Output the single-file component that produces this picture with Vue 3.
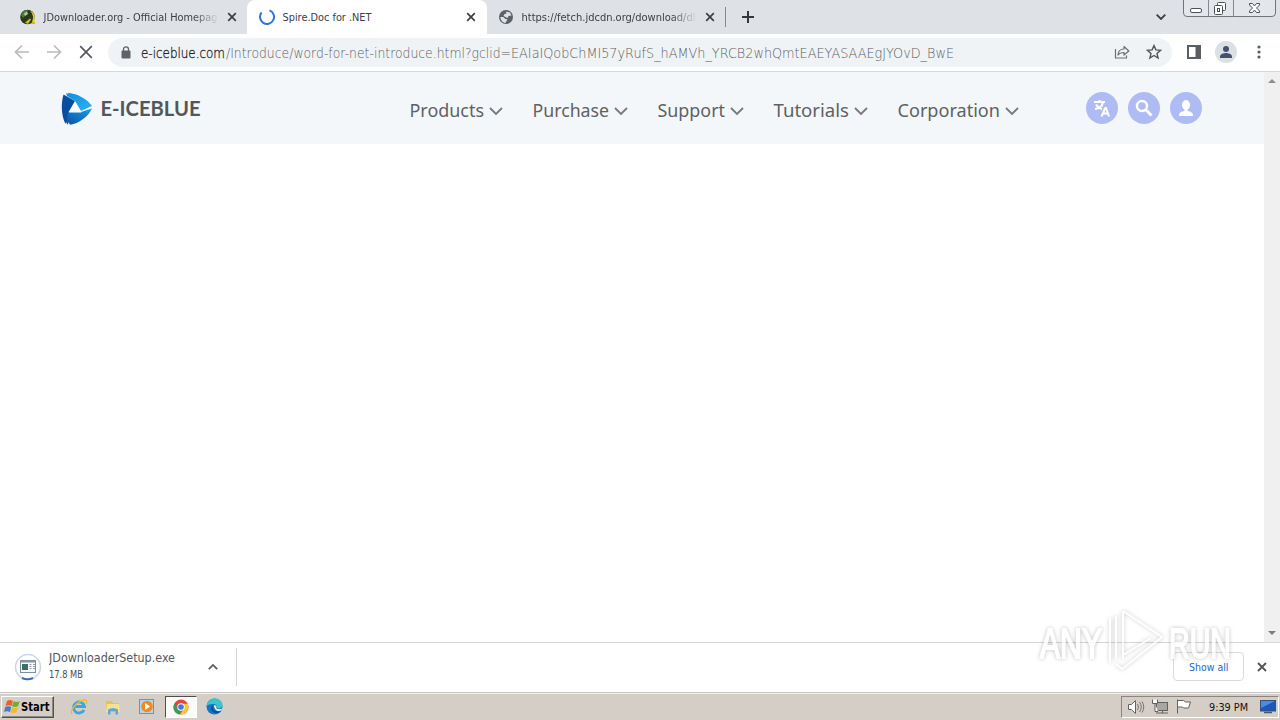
<script setup>
import { ref } from "vue";

const tabs = ref([
    { name: 'jd', text: 'JDownloader.org - Official Homepag', width: 174, active: false },
    { name: 'spire', text: 'Spire.Doc for .NET', width: 89, active: true },
    { name: 'fetch', text: 'https://fetch.jdcdn.org/download/dl', width: 174, active: false },
]);

const navItems = ref([
    { text: 'Products', width: 75 },
    { text: 'Purchase', width: 77 },
    { text: 'Support', width: 68 },
    { text: 'Tutorials', width: 76 },
    { text: 'Corporation', width: 103 },
]);

const activeTab = ref(tabs.value.find(tab => tab.active).name);
function onTabClick(name) {
    activeTab.value = name;
}
</script>

<template>
    <div class="screen">
        <div class="tab-strip">
            <div v-for="tab in tabs" :key="tab.name" class="tab"
                :class="['tab-' + tab.name, { 'tab-active': activeTab === tab.name }]" @click="onTabClick(tab.name)">
                <svg v-if="tab.name === 'jd'" class="tab-icon" viewBox="0 0 16 16">
                    <circle cx="7.500" cy="8" r="7.300" fill="#263a1c" />
                    <path d="M1 6a7 7 0 0 1 7-5l-2 5-3 3z" fill="#4d7a36" />
                    <path d="M4 4.500l3-2 1 2.500-3 2z" fill="#b4c9a0" />
                    <path d="M10 1.500c5 2 6 8 3.500 12l-1.500-1c2-4 1-7-2-11z" fill="#e8cc2a" />
                    <path d="M5 13.500l5-4 1 1-3 4.500zM12 13h3v2h-4z" fill="#d4b822" />
                </svg>
                <svg v-else-if="tab.name === 'spire'" class="tab-icon" viewBox="0 0 16 16">
                    <path d="M10.500 1.400A7 7 0 1 1 2.600 3.500" fill="none" stroke="#2f75d6" stroke-width="2" />
                </svg>
                <svg v-else class="tab-icon" viewBox="0 0 16 16">
                    <circle cx="8" cy="8" r="7" fill="#5c6168" />
                    <path d="M8 2.500l4 1 1.500 3-3 .5-1 2-2-1-2-1 1-2 2-.5z" fill="#dee1e6" />
                    <path d="M2.400 8h3l2 2 2 .3-1 2-1 1.600C4.500 13.500 2.500 11 2.400 8z" fill="#dee1e6" />
                </svg>
                <svg class="tab-title" width="176" height="16">
                    <text x="0.500" y="12" :textLength="tab.width" lengthAdjust="spacingAndGlyphs">{{ tab.text }}</text>
                </svg>
                <svg class="tab-close" viewBox="0 0 10 10">
                    <path d="M1.200 1.200l7.600 7.600M8.800 1.200L1.200 8.800" />
                </svg>
            </div>
            <div class="tab-divider"></div>
            <svg class="new-tab" viewBox="0 0 12 12">
                <path d="M6 0v12M0 6h12" />
            </svg>
            <svg class="tab-search" viewBox="0 0 10 6">
                <path d="M.7.700L5 5 9.300.700" />
            </svg>
            <svg class="window-buttons" width="94" height="18" viewBox="0 0 94 18">
                <path d="M.5 0v13q0 3.500 3.500 3.500h85q3.500 0 3.500-3.500V0" fill="#e3e6ea" stroke="#72767c" />
                <path d="M25.500 0v16.500M50.500 0v16.500" stroke="#85898f" />
                <g fill="#fff" stroke="#4d5157">
                    <rect x="7.500" y="8.500" width="11" height="4" rx="1.500" />
                    <rect x="34.500" y="2.500" width="8" height="8" rx="1" />
                    <rect x="31.500" y="5.500" width="8" height="9" rx="1" />
                    <rect x="34.500" y="8.500" width="2" height="3" />
                    <path d="M66.500 3.500h3l2 2.500 2-2.500h3v1.500l-3 3 3 3v1.500h-3l-2-2.500-2 2.500h-3V11l3-3-3-3z" />
                </g>
            </svg>
        </div>

        <div class="toolbar">
            <svg class="tool back" viewBox="0 0 16 16">
                <path d="M15 8H2M8 1.500L1.500 8 8 14.500" fill="none" stroke="#b9bbbe" stroke-width="1.700" />
            </svg>
            <svg class="tool forward" viewBox="0 0 16 16">
                <path d="M1 8h13M8 1.500L14.500 8 8 14.500" fill="none" stroke="#b9bbbe" stroke-width="1.700" />
            </svg>
            <svg class="tool stop" viewBox="0 0 16 16">
                <path d="M2.200 2.200l11.600 11.600M13.800 2.200L2.200 13.800" fill="none" stroke="#55585c" stroke-width="1.700" />
            </svg>
            <div class="omnibox">
                <svg class="lock" viewBox="0 0 10 13">
                    <rect x=".5" y="4.500" width="9" height="8" rx="1" fill="#5f6368" />
                    <path d="M2.500 5V3.300a2.500 2.500 0 0 1 5 0V5" fill="none" stroke="#5f6368" stroke-width="1.300" />
                </svg>
                <svg class="url" width="820" height="20">
                    <text x="0" y="15.500" class="url-host" textLength="84" lengthAdjust="spacingAndGlyphs">e-iceblue.com</text>
                    <text x="85" y="15.500" class="url-path" textLength="285" lengthAdjust="spacingAndGlyphs">/Introduce/word-for-net-introduce.html?gclid=</text>
                    <text x="370" y="15.500" class="url-path" textLength="443" lengthAdjust="spacingAndGlyphs">EAIaIQobChMI57yRufS_hAMVh_YRCB2whQmtEAEYASAAEgJYOvD_BwE</text>
                </svg>
                <svg class="share" viewBox="0 0 16 16">
                    <path d="M1.500 5v9h11v-2.500" fill="none" stroke="#6b6f74" stroke-width="1.200" />
                    <path d="M4 11c.3-4 2.600-6 6-6V2.500L14.800 7 10 11V8.500C7.500 8.500 5.500 9 4 11z" fill="none" stroke="#6b6f74"
                        stroke-width="1.200" stroke-linejoin="round" />
                </svg>
                <svg class="star" viewBox="0 0 16 16">
                    <path d="M8 1.600l1.900 4.300 4.700.4-3.600 3.100 1.100 4.600L8 11.500 3.900 14 5 9.400 1.400 6.300l4.700-.4z" fill="none"
                        stroke="#505459" stroke-width="1.400" />
                </svg>
            </div>
            <svg class="side-panel" viewBox="0 0 14 14">
                <path d="M0 0h14v14H0zM2 2v10h6.500V2z" fill="#5a5d61" fill-rule="evenodd" />
            </svg>
            <svg class="avatar" viewBox="0 0 22 22">
                <circle cx="11" cy="11" r="11" fill="#dce0e5" />
                <circle cx="11" cy="8" r="3" fill="#44516e" />
                <path d="M5 17v-1.500c0-2.500 4-3.500 6-3.500s6 1 6 3.500V17z" fill="#44516e" />
            </svg>
            <svg class="menu-dots" viewBox="0 0 4 14">
                <circle cx="2" cy="2" r="1.600" />
                <circle cx="2" cy="7" r="1.600" />
                <circle cx="2" cy="12" r="1.600" />
            </svg>
        </div>

        <div class="page">
            <div class="content">
                <header class="site-header">
                    <svg class="logo" width="142" height="34" viewBox="0 0 142 34">
                        <defs>
                            <linearGradient id="logoTop" x1="0" y1="0" x2="1" y2="1">
                                <stop offset="0" stop-color="#0d8fdc" />
                                <stop offset="1" stop-color="#2fb2f6" />
                            </linearGradient>
                            <linearGradient id="logoBottom" x1="0" y1="1" x2="1" y2="0">
                                <stop offset="0" stop-color="#0754a2" />
                                <stop offset="1" stop-color="#1a9cec" />
                            </linearGradient>
                        </defs>
                        <path d="M2.500 2.500L6 4.500l8 4.500-7 12v11.500l-2-2.500-.5 2C0 23 0 11 2.500 2.500z" fill="#0a4d9f" />
                        <path d="M5 1l2.500 1L7 .8C17 2 26 7 31 14l-3.500 1.500L20 19 14 9 6 4z" fill="url(#logoTop)" />
                        <path d="M7 20h13l11-3.500C27 25 18 31.500 9 32.800L7.500 30 7 32.500 5.500 31z" fill="url(#logoBottom)" />
                        <path d="M14 9.500L20.500 20.500h-12.500z" fill="#fff" />
                        <text x="39.500" y="24" class="logo-text" textLength="100" lengthAdjust="spacingAndGlyphs">E-ICEBLUE</text>
                    </svg>
                    <nav class="nav">
                        <a v-for="item in navItems" :key="item.text" class="nav-item">
                            <svg :width="item.width" height="28" class="nav-label">
                                <text x="0.500" y="20" :textLength="item.width - 0.5" lengthAdjust="spacingAndGlyphs">{{ item.text }}</text>
                            </svg>
                            <svg class="nav-chevron" viewBox="0 0 14 9">
                                <path d="M1 1l6 6 6-6" />
                            </svg>
                        </a>
                    </nav>
                    <div class="round-buttons">
                        <svg class="round" viewBox="0 0 32 32">
                            <circle cx="16" cy="16" r="16" fill="#aebcf3" />
                            <path d="M8 10h11M13.500 8v2M10 12.500c1.500 2.500 3.500 4 6 4.500M17 10.500c-.8 3.500-3.500 6-8 6.500M15.500 24.500l3.700-8.500h.8l3 8.500M17 21.500h5"
                                fill="none" stroke="#fff" stroke-width="2" />
                        </svg>
                        <svg class="round" viewBox="0 0 32 32">
                            <circle cx="16" cy="16" r="16" fill="#aebcf3" />
                            <circle cx="14" cy="14" r="5" fill="none" stroke="#fff" stroke-width="2.400" />
                            <path d="M17.500 17.500l6 6" stroke="#fff" stroke-width="2.800" />
                        </svg>
                        <svg class="round" viewBox="0 0 32 32">
                            <circle cx="16" cy="16" r="16" fill="#aebcf3" />
                            <ellipse cx="16" cy="13" rx="4" ry="5" fill="#fff" />
                            <path d="M14.500 16h3v3c3.500.5 5.500 1.500 5.500 5H9c0-3.500 2-4.500 5.500-5z" fill="#fff" />
                        </svg>
                    </div>
                </header>
            </div>
            <div class="scrollbar">
                <svg viewBox="0 0 8 4" class="scroll-arrow">
                    <path d="M0 4l4-4 4 4z" fill="#8f8f8f" />
                </svg>
                <svg viewBox="0 0 8 4" class="scroll-arrow">
                    <path d="M0 0l4 4 4-4z" fill="#7b7b7b" />
                </svg>
            </div>
        </div>

        <div class="shelf">
            <svg class="download-icon" viewBox="0 0 28 28">
                <circle cx="14" cy="14" r="12.500" fill="#fff" stroke="#c9d6ea" stroke-width="1.500" />
                <path d="M8 25a12.500 12.500 0 0 0 11 0" fill="none" stroke="#3f6cb4" stroke-width="2" />
                <rect x="6.500" y="7.500" width="15" height="12" fill="#f6f8f9" stroke="#7d8f9d" />
                <path d="M6.500 8.500h15" stroke="#8397a6" stroke-width="2" />
                <rect x="8" y="11" width="6" height="6" fill="#397265" />
                <path d="M15.500 11.500h2M15.500 13.500h2M15.500 15.500h2M19 11.500h2M19 13.500h2M19 15.500h2" stroke="#8c9ca8" />
            </svg>
            <svg class="download-text" width="130" height="36">
                <text x="0" y="13" class="file-name" textLength="126" lengthAdjust="spacingAndGlyphs">JDownloaderSetup.exe</text>
                <text x="0" y="29" class="file-size" textLength="34" lengthAdjust="spacingAndGlyphs">17.8 MB</text>
            </svg>
            <svg class="shelf-chevron" viewBox="0 0 10 6">
                <path d="M.8 5.200L5 1l4.200 4.200" />
            </svg>
            <div class="shelf-divider"></div>
            <div class="show-all">
                <svg width="40" height="16">
                    <text x="0" y="11.500" textLength="39.500" lengthAdjust="spacingAndGlyphs">Show all</text>
                </svg>
            </div>
            <svg class="shelf-close" viewBox="0 0 10 10">
                <path d="M1 1l8 8M9 1L1 9" />
            </svg>
        </div>

        <div class="taskbar">
            <div class="start">
                <svg width="17" height="16" viewBox="0 0 17 16">
                    <path d="M3 2q3-2 6 0L7.500 7q-3-1.500-6 0z" fill="#e8602c" />
                    <path d="M9.700 2.300q3 1.500 6 0L14 7.300q-3 1.500-6 0z" fill="#78a936" />
                    <path d="M1.200 8q3-1.500 6 0L6 13q-3-1.500-6 0z" fill="#3d7fc9" />
                    <path d="M8 8.300q3 1.500 6 0L12.500 13.300q-3 1.500-6 0z" fill="#f2bb2d" />
                </svg>
                <svg width="30" height="16">
                    <text x="0" y="11.500" class="start-text" textLength="28.500" lengthAdjust="spacingAndGlyphs">Start</text>
                </svg>
            </div>
            <div class="task">
                <svg width="18" height="18" viewBox="0 0 18 18">
                    <path d="M14 12a5.500 5.500 0 1 1 .5-3.500H5" fill="none" stroke="#3fa5dc" stroke-width="2.800" />
                    <path d="M2 16C-1 12 9 2 15 2c2 0 2 2 1 4" fill="none" stroke="#e3bd3b" stroke-width="1.300" />
                </svg>
            </div>
            <div class="task">
                <svg width="18" height="18" viewBox="0 0 18 18">
                    <path d="M2 3h6l1 2h6v9H2z" fill="#e3c25c" />
                    <path d="M3 6h12l1 8H2z" fill="#f5e193" />
                    <path d="M4 16.500v-5q5-3 10 0v5h-2.500v-3h-5v3z" fill="#5fa8d3" />
                </svg>
            </div>
            <div class="task">
                <svg width="18" height="18" viewBox="0 0 18 18">
                    <rect x="1.500" y="1.500" width="14" height="14" fill="#b8d3ec" stroke="#6a93bd" />
                    <circle cx="9" cy="8.500" r="5.800" fill="#f08a1c" />
                    <path d="M7 5l5 3.500-5 3.500z" fill="#fff" />
                </svg>
            </div>
            <div class="task task-open">
                <svg width="16" height="16" viewBox="0 0 16 16">
                    <circle cx="8" cy="8" r="7.500" fill="#e5463a" />
                    <path d="M1.500 4.300L5 10l3 2-1.500 3.500C1 14.500-1 8.500 1.500 4.300z" fill="#36a154" />
                    <path d="M8 4.800h6.800c2 5-1.500 11-8 10.700L11 9.800z" fill="#f7c92e" />
                    <circle cx="8" cy="8" r="3.700" fill="#fff" />
                    <circle cx="8" cy="8" r="2.800" fill="#3c78e0" />
                </svg>
            </div>
            <div class="task task-edge">
                <svg width="17" height="17" viewBox="0 0 17 17">
                    <circle cx="8.500" cy="8.500" r="8" fill="#1674c4" />
                    <path d="M.6 8C1 3 5 .5 9 .5c5 0 8 4 7.500 7-.5 3-4 3.500-6 2.500 1-2-.5-4-3-4S2 6.500.6 8z" fill="#3cc5c8" />
                    <path d="M7 7.500c-1 3 1 6 5 6 1.300 0 2.500-.5 3.300-1C12 17 5.500 15 5 10.500 5 9 6 8 7 7.500z" fill="#0c4e99" />
                    <path d="M8 7.500c1.500-.5 3 .5 2.200 2.500 1 1.500 4 1.500 5.800.5l-.7 2C12 14 8 12 8 7.500z" fill="#e5eff5" />
                </svg>
            </div>
            <div class="tray">
                <svg class="tray-icons" width="68" height="18" viewBox="0 0 68 18">
                    <g fill="#fff" stroke="#65625d">
                        <path d="M.5 6.500h3L7.500 2.500v13L3.500 11.500h-3z" />
                        <path d="M9.500 6q2 3 0 6M11.500 4q3.500 5 0 10M14 3.500q3.500 5.500 0 11" fill="none" stroke="#77746f" />
                        <rect x="28.500" y="4.500" width="11" height="8" fill="#a9a7a3" />
                        <path d="M28 15h12M34.500 13v2" />
                        <path d="M24.500 1.500v4h5v-4M27 5.500v8h3" />
                        <path d="M49.500 1.500v14M49.500 2.500h6l2 1.500h5l-2 6h-5l-1-1h-5z" />
                    </g>
                </svg>
                <svg class="clock" width="40" height="16">
                    <text x="0" y="11.500" textLength="39" lengthAdjust="spacingAndGlyphs">9:39 PM</text>
                </svg>
                <svg width="16" height="14" viewBox="0 0 16 14">
                    <rect x=".5" y=".5" width="15" height="10.500" fill="#1d57b8" stroke="#38517c" />
                    <path d="M1 1h14L1 8z" fill="#4b8ce0" />
                    <path d="M4 12.500h8" stroke="#49566a" stroke-width="1.500" />
                </svg>
            </div>
        </div>

        <svg class="watermark" width="204" height="70" viewBox="0 0 204 70">
            <g class="mark-shape">
                <text x="4" y="53" textLength="62" lengthAdjust="spacingAndGlyphs">ANY</text>
                <text x="133" y="53" textLength="62" lengthAdjust="spacingAndGlyphs">RUN</text>
                <path d="M74 13v45M80 11v43M87 6v48M87 6l39 26-40 32-6-5M87 18v32l28-17" fill="none" />
            </g>
        </svg>
    </div>
</template>

<style>
body {
    margin: 0;
    overflow: hidden;
}
</style>

<style scoped>
.screen {
    position: relative;
    width: 1280px;
    height: 720px;
    display: flex;
    flex-direction: column;
    background: #fff;
    font-family: "DejaVu Sans Condensed", "DejaVu Sans", sans-serif;
    overflow: hidden;
}

svg {
    display: block;
    flex-shrink: 0;
}

.tab-strip {
    display: flex;
    align-items: center;
    height: 34px;
    background: #dee1e6;
}

.tab {
    box-sizing: border-box;
    display: flex;
    align-items: center;
    width: 240px;
    height: 34px;
    padding: 0 11px 0 12px;
    flex-shrink: 0;
}

.tab-jd {
    width: 247px;
    padding-left: 20px;
    padding-right: 10px;
}

.tab-fetch {
    width: 238px;
    padding-left: 11px;
    padding-right: 10px;
}

.tab-active {
    background: #fff;
    border-radius: 8px 8px 0 0;
}

.tab-icon {
    width: 16px;
    height: 16px;
    margin-right: 7px;
}

.tab-title {
    font-size: 11px;
    fill: #3c4043;
}

.tab-jd .tab-title,
.tab-fetch .tab-title {
    -webkit-mask-image: linear-gradient(to right, #000 150px, transparent 176px);
    mask-image: linear-gradient(to right, #000 150px, transparent 176px);
}

.tab-close {
    width: 10px;
    height: 10px;
    margin-left: auto;
    stroke: #3c4043;
    stroke-width: 1.7;
}

.tab-divider {
    width: 1px;
    height: 20px;
    background: #85898e;
}

.new-tab {
    width: 12px;
    height: 12px;
    margin-left: 16px;
    stroke: #33363a;
    stroke-width: 2;
}

.tab-search {
    width: 10px;
    height: 6px;
    margin-left: auto;
    margin-right: 17px;
    fill: none;
    stroke: #3c4043;
    stroke-width: 1.8;
}

.window-buttons {
    align-self: flex-start;
    margin-right: 3px;
}

.toolbar {
    box-sizing: border-box;
    display: flex;
    align-items: center;
    height: 38px;
    padding: 0 19px 1px 14px;
    border-bottom: 1px solid #d6d8da;
}

.tool {
    width: 16px;
    height: 16px;
    margin-right: 16px;
}

.stop {
    margin-right: 14px;
}

.omnibox {
    box-sizing: border-box;
    display: flex;
    align-items: center;
    width: 1064px;
    height: 29px;
    padding: 0 10px 0 13px;
    border-radius: 15px;
    background: #f0f3f5;
}

.lock {
    width: 10px;
    height: 13px;
    margin-right: 10px;
}

.url {
    font-family: "DejaVu Sans", sans-serif;
    font-weight: 200;
    font-size: 14px;
}

.url-host {
    fill: #202327;
    stroke: #202327;
    stroke-width: 0.3;
}

.url-path {
    fill: #5a5e63;
}

.share {
    width: 16px;
    height: 16px;
    margin-left: auto;
    margin-right: 16px;
}

.star {
    width: 16px;
    height: 16px;
}

.side-panel {
    width: 14px;
    height: 14px;
    margin-left: 15px;
}

.avatar {
    width: 22px;
    height: 22px;
    margin-left: 14px;
}

.menu-dots {
    width: 4px;
    height: 14px;
    margin-left: auto;
    fill: #5a5d61;
}

.page {
    display: flex;
    height: 570px;
}

.content {
    flex: 1;
}

.site-header {
    display: flex;
    height: 72px;
    background: #f4f7fa;
}

.logo {
    margin: 20px 0 0 61px;
}

.logo-text {
    font: bold 20px Lato, sans-serif;
    fill: #53565b;
}

.nav {
    display: flex;
    margin: 25px 0 0 206px;
    gap: 29px;
}

.nav-item {
    display: flex;
    height: 28px;
    cursor: pointer;
}

.nav-label {
    font: 18.5px "Noto Sans", sans-serif;
    fill: #606164;
    overflow: visible;
}

.nav-chevron {
    width: 14px;
    height: 9px;
    margin: 10px 0 0 5px;
    fill: none;
    stroke: #77797c;
    stroke-width: 1.8;
}

.round-buttons {
    display: flex;
    gap: 10px;
    margin: 20px 62px 0 auto;
}

.round {
    width: 32px;
    height: 32px;
}

.scrollbar {
    box-sizing: border-box;
    display: flex;
    flex-direction: column;
    justify-content: space-between;
    align-items: center;
    width: 16px;
    padding: 7px 0;
    background: #f0f0f0;
}

.scroll-arrow {
    width: 8px;
    height: 4px;
}

.shelf {
    box-sizing: border-box;
    display: flex;
    align-items: center;
    height: 50px;
    padding: 0 13px 2px 14px;
    border-top: 1px solid #d5d7d9;
}

.download-icon {
    width: 28px;
    height: 28px;
}

.download-text {
    margin-left: 7px;
}

.file-name {
    font-size: 12px;
    fill: #54575b;
}

.file-size {
    font-size: 10px;
    fill: #4b4e52;
}

.shelf-chevron {
    width: 10px;
    height: 6px;
    margin-left: 29px;
    fill: none;
    stroke: #55585c;
    stroke-width: 1.7;
}

.shelf-divider {
    width: 1px;
    height: 38px;
    margin-left: 18px;
    background: #d2d4d6;
}

.show-all {
    box-sizing: border-box;
    display: flex;
    align-items: center;
    justify-content: center;
    width: 71px;
    height: 29px;
    margin-left: auto;
    border: 1px solid #d9dbde;
    border-radius: 4px;
    font-size: 11px;
    fill: #1967c9;
}

.shelf-close {
    width: 10px;
    height: 10px;
    margin-left: 13px;
    stroke: #505357;
    stroke-width: 1.8;
}

.taskbar {
    box-sizing: border-box;
    display: flex;
    align-items: center;
    height: 28px;
    padding: 0 1px;
    border-top: 1px solid #c9c5bf;
    box-shadow: inset 0 1px #f4f2ee;
    background: #d5cec6;
}

.start {
    box-sizing: border-box;
    display: flex;
    align-items: center;
    width: 53px;
    height: 22px;
    padding-left: 2px;
    border: 1px solid;
    border-color: #fff #55514c #55514c #fff;
    box-shadow: inset -1px -1px #8d8881;
}

.start-text {
    font-size: 12px;
    font-weight: bold;
    fill: #000;
}

.task {
    box-sizing: border-box;
    display: flex;
    align-items: center;
    justify-content: center;
    width: 34px;
    height: 22px;
}

.start + .task {
    margin-left: 8px;
}

.task-open {
    width: 32px;
    margin-left: 1px;
    background: #fbfaf8;
    border: 1px solid;
    border-color: #514e4a #fff #fff #514e4a;
}

.tray {
    box-sizing: border-box;
    display: flex;
    align-items: center;
    width: 158px;
    height: 22px;
    margin-left: auto;
    padding: 0 2px 0 6px;
    border: 1px solid;
    border-color: #8a8580 #fff #fff #8a8580;
}

.clock {
    margin: 0 11px 0 13px;
    font-size: 11px;
    fill: #111;
}

.watermark {
    position: absolute;
    left: 1036px;
    top: 605px;
    overflow: visible;
}

.mark-shape {
    font: 43px "Liberation Sans", sans-serif;
    fill: #fff;
    stroke: #fff;
    stroke-width: 2;
    opacity: 0.75;
    filter: drop-shadow(0 0 2px rgba(0, 0, 0, 0.32));
}
</style>
